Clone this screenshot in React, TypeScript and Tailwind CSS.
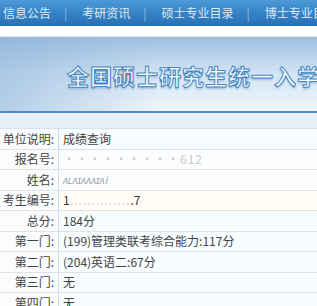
const navItems = ["信息公告", "考研资讯", "硕士专业目录", "博士专业目录"];

const rows: { label: string; value: React.ReactNode; tint?: string }[] = [
  { label: "单位说明:", value: "成绩查询" },
  { label: "报名号:", value: <span className="text-[#c8ccd2] tracking-[1px]">·········612</span>, tint: "bg-[#fcfdff]" },
  { label: "姓名:", value: <span className="text-[#9aa0a8] text-[10px] italic">ʌʟʌɪʌʌʌɪʌi</span>, tint: "bg-[#fcfdff]" },
  { label: "考生编号:", value: <span className="text-[#333]">1<span className="text-[#d0d4d8] tracking-[1px]">..............</span>.7</span>, tint: "bg-[#fffdf6]" },
  { label: "总分:", value: "184分" },
  { label: "第一门:", value: "(199)管理类联考综合能力:117分" },
  { label: "第二门:", value: "(204)英语二:67分" },
  { label: "第三门:", value: "无" },
  { label: "第四门:", value: "无" },
];

export default function App() {
  return (
    <div className="w-[317px] h-[306px] overflow-hidden bg-white font-['Noto_Sans_CJK_SC',sans-serif]">
      {/* top nav */}
      <div className="h-[26px] flex items-center bg-gradient-to-b from-[#4d9ad6] via-[#3582c6] to-[#2a70b4] text-[12px] text-[#dcebf8] whitespace-nowrap">
        {navItems.map((item, i) => (
          <div key={item} className="flex items-center">
            <span className={i === 0 ? "pl-[3px]" : ""}>{item}</span>
            {i < navItems.length - 1 && <span className="ml-[13px] mr-[15px] text-[#8fc0e8]">|</span>}
          </div>
        ))}
      </div>
      <div className="h-[11px] bg-white border-b border-[#dbe8f4]" />
      {/* banner */}
      <div className="h-[74px] relative bg-gradient-to-b from-[#9dbfe0] via-[#d4e5f4] to-[#eef5fb] flex items-center">
        <div className="absolute inset-0 bg-gradient-to-r from-[#8eb4da]/60 via-transparent to-transparent" />
        <div className="relative pl-[67px] pt-[2px] text-[22px] font-bold tracking-[1px] text-white whitespace-nowrap [-webkit-text-stroke:1px_#3f85c2] [text-shadow:0_2px_2px_rgba(60,120,180,0.35)]">
          全国硕士研究生统一入学考试
        </div>
      </div>
      <div className="h-[2px] bg-[#4f8cc4]" />
      <div className="h-[16px] bg-[#e8f1f9] border-b border-[#d6e3ef]" />
      {/* table */}
      <div className="text-[12px] text-[#444]">
        {rows.map((r) => (
          <div key={r.label} className="flex h-[20.5px] border-b border-[#dfe3e8]">
            <div className="w-[59px] shrink-0 flex justify-end items-center pr-[4px] border-r border-[#d2dbe4] bg-[#fbfcfd] whitespace-nowrap">
              {r.label}
            </div>
            <div className={"flex-1 flex items-center pl-[4px] whitespace-nowrap " + (r.tint ?? "bg-[#f7fcff]")}>
              {r.value}
            </div>
          </div>
        ))}
      </div>
    </div>
  );
}
